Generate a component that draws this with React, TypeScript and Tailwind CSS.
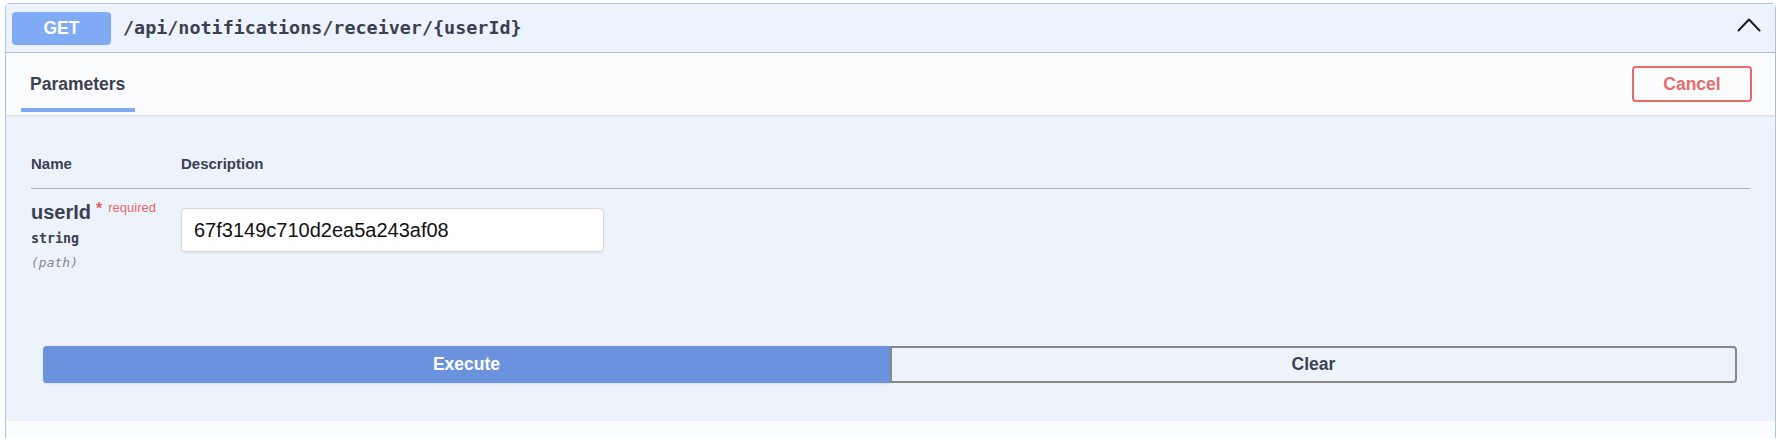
const border = "border-[#a5c4f4]";

function ChevronUp() {
  return (
    <svg width="24" height="24" viewBox="0 0 24 24" className="shrink-0" aria-hidden="true">
      <polyline
        points="1.5,14.5 12,3.5 22.5,14.5"
        fill="none"
        stroke="#1f1f1f"
        strokeWidth="2"
        strokeLinecap="round"
        strokeLinejoin="round"
      />
    </svg>
  );
}

function ParameterRow() {
  return (
    <div className="flex items-start pt-[11px]">
      <div className="w-[150px] shrink-0">
        <div className="flex items-start">
          <span className="text-[20px] leading-[24px] font-bold text-[#3b4151]">userId</span>
          <span className="ml-[5px] mt-[1px] text-[16px] leading-[16px] font-bold text-[#e15f5f]">*</span>
          <span className="ml-[6px] mt-[1px] text-[13px] leading-[13px] text-[#e46a6a]">required</span>
        </div>
        <div className="mt-[6px] font-['DejaVu_Sans_Mono',monospace] text-[13.3px] leading-[18px] font-semibold text-[#3b4151]">
          string
        </div>
        <div className="mt-[6px] font-['DejaVu_Sans_Mono',monospace] text-[13px] leading-[18px] italic text-[#8a8a8a]">
          (path)
        </div>
      </div>
      <input
        className="mt-[8px] h-[44px] w-[423px] rounded-[4px] border border-[#d9d9d9] bg-white px-[12px] text-[20px] text-[#111] shadow-[0_1px_2px_rgba(0,0,0,0.08)] outline-none"
        defaultValue="67f3149c710d2ea5a243af08"
      />
    </div>
  );
}

export default function App() {
  return (
    <div className="min-h-[443px] w-[1778px] bg-white pl-[5px] pt-[3px] font-['Liberation_Sans',Arial,sans-serif]">
      <div className={`w-[1771px] rounded-t-[5px] border border-b-0 ${border}`}>
        <header className={`flex h-[49px] items-center border-b ${border} bg-[#edf3fc] pl-[6px] pr-[14px]`}>
          <span className="flex h-[33px] w-[99px] items-center justify-center rounded-[4px] bg-[#80abf5] text-[17.5px] font-bold text-white">
            GET
          </span>
          <span className="ml-[12px] font-['DejaVu_Sans_Mono',monospace] text-[18.4px] font-bold text-[#3b4151]">
            /api/notifications/receiver/{"{userId}"}
          </span>
          <span className="ml-auto">
            <ChevronUp />
          </span>
        </header>

        <div className="relative z-10 flex h-[62px] items-center justify-between bg-[#fbfcfe] pl-[24px] pr-[23px] shadow-[0_1px_2px_rgba(0,0,0,0.1)]">
          <div className="relative flex h-full items-center">
            <span className="text-[17.5px] font-bold text-[#3b4151]">Parameters</span>
            <span className="absolute bottom-[3px] left-[-9px] right-[-10px] h-[4px] bg-[#7ea8f1]" />
          </div>
          <button className="h-[36px] w-[120px] rounded-[4px] border-2 border-[#e56b6b] bg-transparent text-[17.5px] font-bold text-[#e56b6b]">
            Cancel
          </button>
        </div>

        <section className="h-[306px] bg-[#ecf3fb] px-[25px] pt-[40px]">
          <div className="flex border-b border-[#a9b2c0] pb-[15px] text-[15px] leading-[18px] font-bold text-[#3b4151]">
            <span className="w-[150px]">Name</span>
            <span>Description</span>
          </div>
          <ParameterRow />
          <div className="ml-[12px] mr-[13px] mt-[74px] grid h-[37px] grid-cols-2">
            <button className="rounded-l-[4px] bg-[#6a92dd] text-[17.5px] font-bold text-white shadow-[0_1px_2px_rgba(0,0,0,0.1)]">
              Execute
            </button>
            <button className="rounded-r-[4px] border-2 border-[#888888] bg-transparent text-[17.5px] font-bold text-[#3b4151]">
              Clear
            </button>
          </div>
        </section>

        <div className="h-[17px] bg-[#fafcfe]" />
      </div>
    </div>
  );
}
